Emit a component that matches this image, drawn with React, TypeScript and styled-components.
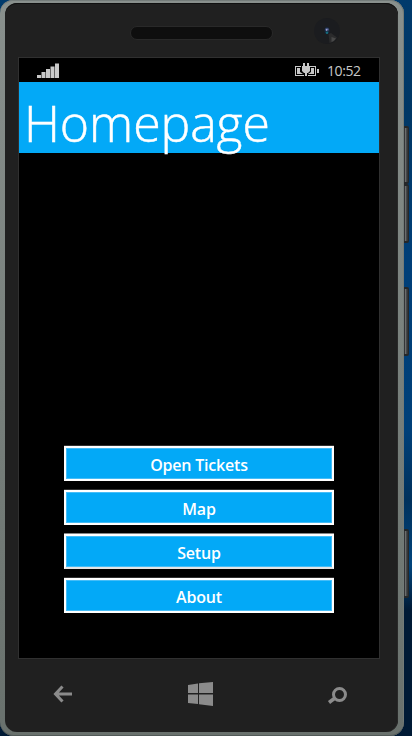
import React from "react";
import styled, { createGlobalStyle } from "styled-components";

const GlobalStyle = createGlobalStyle`
  * { box-sizing: border-box; }
  html, body { margin: 0; padding: 0; overflow: hidden; }
  body { font-family: "Open Sans", "Noto Sans", sans-serif; }
`;

const Desktop = styled.div`
  display: grid;
  grid-template-columns: 404px 8px;
  width: 412px;
  height: 736px;
  background: linear-gradient(180deg, #003a6c 0, #003765 110px, #003f78 260px, #004079 430px, #00315c 500px, #01457d 565px, #001a35 610px, #001a35 100%);
`;

const Phone = styled.main`
  display: flex;
  flex-direction: column;
  height: 736px;
  padding: 3px 6px 4px 5px;
  border-radius: 13px 14px 14px 14px;
  background: linear-gradient(180deg, #89908d 0, #777f7b 55%, #69716d 100%);
  box-shadow: inset 0 -1px #525a58, inset -1px 0 #737b78, inset 0 1px #747c7a;
`;

const Face = styled.div`
  display: flex;
  flex-direction: column;
  flex: 1;
  padding: 0 18px 0 13px;
  border-radius: 12px;
  background: #202020;
  box-shadow: inset 0 1px #101010, inset -1px 0 #292929;
`;

const TopBezel = styled.div`
  display: flex;
  align-items: flex-start;
  height: 54px;
  padding: 15px 0 0 112px;
`;

const Speaker = styled.div`
  width: 143px;
  height: 14px;
  margin-top: 8px;
  border: 1px solid #292929;
  border-radius: 7px;
  background: #0e0e0e;
`;

const Camera = styled.svg`
  width: 26px;
  height: 26px;
  margin-left: 41px;
`;

const Screen = styled.section`
  display: flex;
  flex-direction: column;
  width: 362px;
  height: 602px;
  border: 1px solid #303030;
  background: #000;
`;

const StatusBar = styled.div`
  display: flex;
  align-items: center;
  height: 24px;
  padding: 0 18px;
  color: #c8c8c8;
`;

const Signal = styled.svg`
  width: 22px;
  height: 15px;
  margin-right: auto;
`;

const Battery = styled.svg`
  width: 25px;
  height: 14px;
  margin-right: 7px;
`;

const Clock = styled.time`
  width: 34px;
  font-size: 14px;
  line-height: 24px;
  letter-spacing: -0.4px;
  white-space: nowrap;
  padding-top: 2px;
`;

const Header = styled.header`
  height: 71px;
  padding-left: 5px;
  background: #03a9f7;
`;

const Title = styled.h1`
  margin: 0;
  padding-top: 6px;
  color: #fff;
  font-size: 50px;
  font-weight: 300;
  line-height: 70px;
  letter-spacing: -0.1px;
  white-space: nowrap;
  -webkit-text-stroke: 0.5px #fff;
`;

const Menu = styled.nav`
  display: flex;
  flex: 1;
  flex-direction: column;
  justify-content: flex-end;
  gap: 9px;
  padding: 0 45px 45px;
`;

const MenuButton = styled.button`
  height: 35px;
  padding: 2px 0 0;
  border: 2px solid #fff;
  background: #03a9f7;
  box-shadow: inset 0 0 0 1px #45bdf8, 0 -1px #303030;
  color: #fff;
  font-family: "Open Sans", "Noto Sans", sans-serif;
  font-size: 16px;
  font-weight: 550;
  line-height: 28px;
  letter-spacing: -0.2px;

  &:nth-child(3) {
    box-shadow: inset 0 0 0 1px #45bdf8, 0 -1px #858585;
    border-bottom-color: #e4e4e4;
  }
`;

const NavKeys = styled.div`
  display: flex;
  justify-content: space-between;
  align-items: flex-start;
  padding: 21px 31px 0 34px;
`;

const KeyIcon = styled.svg`
  width: 28px;
  height: 28px;
  color: #8b8b8b;
`;

const Rail = styled.aside`
  padding-top: 126px;
`;

const HardwareKey = styled.div<{ $height: number; $gap: number }>`
  width: 5px;
  height: ${({ $height }) => $height}px;
  margin-bottom: ${({ $gap }) => $gap}px;
  border: solid #252729;
  border-width: 2px 1px 2px 0;
  border-radius: 0 2px 2px 0;
  background: linear-gradient(90deg, #333537 0 1px, #6b6d6e 1px 2px, #46494b 2px 3px, #343638 3px);
`;

const menuItems = ["Open Tickets", "Map", "Setup", "About"];

const hardwareKeys = [
  { height: 58, gap: 0 },
  { height: 59, gap: 44 },
  { height: 69, gap: 173 },
  { height: 69, gap: 0 },
];

export default function App() {
  return (
    <>
      <GlobalStyle />
      <Desktop>
        <Phone>
          <Face>
            <TopBezel>
              <Speaker />
              <Camera viewBox="0 0 26 26" aria-hidden="true">
                <circle cx="13" cy="13" r="13" fill="#1b1c1f" />
                <path d="M14.500 16 17 15l6 4.500Q20 24 15.500 25Z" fill="#2b2b2c" />
                <path d="m17.500 19 4.500 1.500q-2 3-4.500 3.500Z" fill="#484848" />
                <ellipse cx="13" cy="12.500" rx="2.500" ry="3.500" fill="#18283e" />
                <path d="M11.500 10.500h3v2h-3z" fill="#6872ac" />
                <circle cx="13" cy="14.700" r="1.200" fill="#146b7b" />
                <path d="M12 11.500h1v1h-1z" fill="#cbd0eb" />
              </Camera>
            </TopBezel>
            <Screen>
              <StatusBar>
                <Signal viewBox="0 0 22 15" fill="currentColor" aria-label="Signal">
                  <path d="M0 12h4v3H0zM4.500 9h4v6h-4zM9 6h4v9H9zM13.500 3.500h4V15h-4zM18 .500h4V15h-4z" />
                </Signal>
                <Battery viewBox="0 0 25 14" fill="currentColor" aria-label="Charging">
                  <path d="M0 3h6v1H1v8h8v1H0zM15 3h6v10h-8v-1h7V4h-5zM22 6h2v4h-2z" />
                  <path d="M2 5h3v4l3 2H2zM16 5h3v6h-6l3-2zM7 3h1V0h2v3h2V0h2v3h1v5l-2 2h-1v3h-2v-3H9L7 8z" />
                </Battery>
                <Clock>10:52</Clock>
              </StatusBar>
              <Header>
                <Title>Homepage</Title>
              </Header>
              <Menu>
                {menuItems.map((item) => (
                  <MenuButton key={item}>{item}</MenuButton>
                ))}
              </Menu>
            </Screen>
            <NavKeys>
              <KeyIcon viewBox="0 0 28 28" aria-label="Back">
                <path d="M20 14H3.500M10.500 6.500 3.500 14l7 7.500" fill="none" stroke="currentColor" strokeWidth="3" />
              </KeyIcon>
              <KeyIcon viewBox="0 0 28 28" fill="currentColor" aria-label="Start">
                <path d="M1 5 11 3.500v9.500H1zM12 3.300 26 2v11H12zM1 14.500h10V24L1 23zM12 14.500h14V26l-14-1.700z" />
              </KeyIcon>
              <KeyIcon viewBox="0 0 28 28" aria-label="Search">
                <circle cx="18.500" cy="14.500" r="6" fill="none" stroke="currentColor" strokeWidth="3" />
                <path d="m14 18-6 4.500" stroke="currentColor" strokeWidth="3.500" />
              </KeyIcon>
            </NavKeys>
          </Face>
        </Phone>
        <Rail>
          {hardwareKeys.map((key, index) => (
            <HardwareKey key={index} $height={key.height} $gap={key.gap} />
          ))}
        </Rail>
      </Desktop>
    </>
  );
}
